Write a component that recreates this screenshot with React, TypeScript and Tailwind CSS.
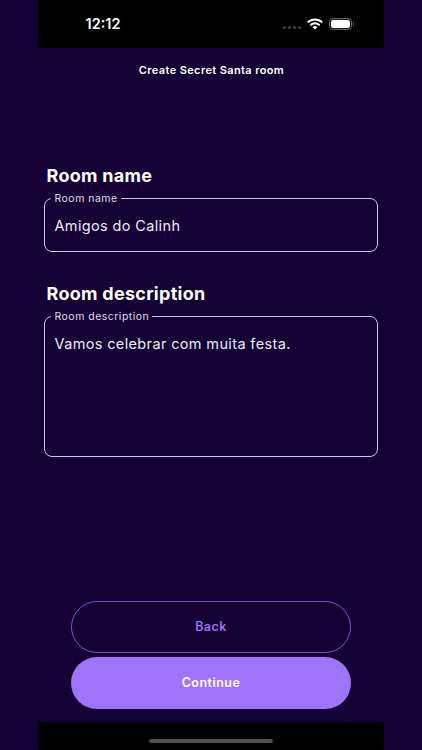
const dots = [0, 1, 2, 3]

interface FieldProps {
  title: string
  value: string
  boxClass: string
}

function StatusBar() {
  return (
    <div className="flex h-12 items-center justify-between bg-black pr-[29px] pl-12">
      <span className="text-[14.5px] leading-5 font-semibold">12:12</span>
      <div className="flex items-center">
        <div className="mt-[7px] mr-[6px] flex gap-[2px]">
          {dots.map((d) => (
            <span key={d} className="h-[3px] w-[3px] rounded-full bg-[#454545]" />
          ))}
        </div>
        <svg className="mr-[6px] h-3 w-4" viewBox="0 0 16 12" fill="none" stroke="white" strokeWidth="2">
          <path d="M.8 4.4a10.3 10.3 0 0 1 14.4 0" />
          <path d="M3.4 7.2a6.6 6.6 0 0 1 9.2 0" />
          <path d="M8 11.6 5.7 9.2a3.3 3.3 0 0 1 4.6 0Z" fill="white" stroke="none" />
        </svg>
        <svg className="h-3 w-[26px]" viewBox="0 0 26 12" fill="none">
          <rect x=".6" y=".6" width="21.8" height="10.8" rx="3.6" stroke="#5c5c5c" strokeWidth="1.2" />
          <rect x="2" y="2" width="19" height="8" rx="2.3" fill="white" />
          <path d="M23.8 4v4c.8-.3 1.3-1.1 1.3-2s-.5-1.7-1.3-2Z" fill="#5c5c5c" />
        </svg>
      </div>
    </div>
  )
}

function Field({ title, value, boxClass }: FieldProps) {
  return (
    <div>
      <h2 className="pt-px pl-[3px] text-[18px] leading-6 font-bold tracking-[0.28px]">{title}</h2>
      <fieldset className={`mt-[3px] rounded-lg border border-[#cfc5de] pl-[6px] ${boxClass}`}>
        <legend className="h-[15px] pr-[3px] pl-1 text-[10.5px] leading-[15px] tracking-[0.48px] text-[#e2dcec]">
          {title}
        </legend>
        <p className="pt-[10px] pl-1 text-[14.5px] leading-5 tracking-[0.36px] text-[#efeaf6]">{value}</p>
      </fieldset>
    </div>
  )
}

export default function App() {
  return (
    <div className="flex h-[750px] w-[422px] justify-center overflow-hidden bg-[#140035] pr-px font-['Inter','Liberation_Sans',sans-serif] text-white">
      <div className="flex w-[346px] flex-col">
        <StatusBar />
        <header className="pt-[14px] pl-[2px] text-center text-[11px] leading-4 font-semibold tracking-[0.38px]">
          Create Secret Santa room
        </header>

        <main className="flex flex-1 flex-col px-[6px] pt-[85px]">
          <Field title="Room name" value="Amigos do Calinh" boxClass="h-[61px]" />
          <div className="mt-[29px]">
            <Field title="Room description" value="Vamos celebrar com muita festa." boxClass="h-[148px]" />
          </div>
        </main>

        <footer className="flex flex-col gap-1 px-[33px] pb-[13px] text-[12.5px] font-semibold tracking-[0.48px]">
          <button className="h-[52px] rounded-full border border-[#7955c8] pl-px text-[#9c6ff5]">Back</button>
          <button className="h-[52px] rounded-full bg-[#9f74fb] pl-px">Continue</button>
        </footer>

        <div className="flex h-7 items-center justify-center bg-black pt-[10px]">
          <span className="h-1 w-[124px] rounded-full bg-[#505050]" />
        </div>
      </div>
    </div>
  )
}
